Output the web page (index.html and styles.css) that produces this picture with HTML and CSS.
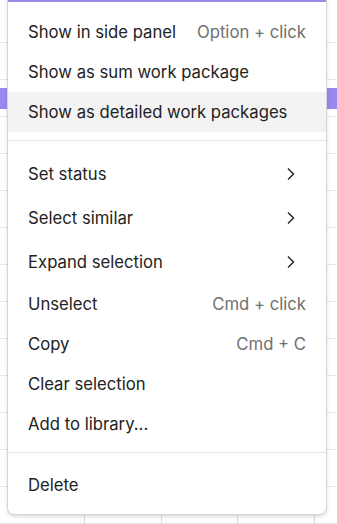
FILE: index.html
```html
<!DOCTYPE html>
<html lang="en">
<head>
    <meta charset="UTF-8">
    <meta name="viewport" content="width=device-width, initial-scale=1.0">
    <title>Context menu</title>
    <link rel="stylesheet" href="styles.css">
</head>
<body>
    <div class="sheet">
        <div class="row short"></div>
        <div class="row"></div>
        <div class="row selected"></div>
        <div class="row"></div>
        <div class="row"></div>
        <div class="row"></div>
        <div class="row"></div>
        <div class="row"></div>
        <div class="row"></div>
        <div class="row"></div>
        <div class="row"></div>
        <div class="row"></div>
        <div class="row"></div>
        <div class="row cols"></div>
    </div>

    <div class="context-menu">
        <div class="menu-group">
            <div class="menu-item"><span>Show in side panel</span><span class="shortcut">Option + click</span></div>
            <div class="menu-item"><span>Show as sum work package</span></div>
            <div class="menu-item active"><span>Show as detailed work packages</span></div>
        </div>
        <div class="menu-group">
            <div class="menu-item submenu"><span>Set status</span>
                <svg class="chevron" width="10" height="14" viewBox="0 0 10 14"><path d="M2 1.5 L7.5 7 L2 12.5" /></svg>
            </div>
            <div class="menu-item submenu"><span>Select similar</span>
                <svg class="chevron" width="10" height="14" viewBox="0 0 10 14"><path d="M2 1.5 L7.5 7 L2 12.5" /></svg>
            </div>
            <div class="menu-item submenu"><span>Expand selection</span>
                <svg class="chevron" width="10" height="14" viewBox="0 0 10 14"><path d="M2 1.5 L7.5 7 L2 12.5" /></svg>
            </div>
            <div class="menu-item"><span>Unselect</span><span class="shortcut">Cmd + click</span></div>
            <div class="menu-item"><span>Copy</span><span class="shortcut">Cmd + C</span></div>
            <div class="menu-item"><span>Clear selection</span></div>
            <div class="menu-item"><span>Add to library...</span></div>
        </div>
        <div class="menu-group">
            <div class="menu-item danger"><span>Delete</span></div>
        </div>
    </div>
</body>
</html>
```

FILE: styles.css
```css
body {
    margin: 0;
    padding: 0;
    font-family: Inter, "Noto Sans", sans-serif;
    background-color: #fff;
    overflow: hidden;
}

/* grid behind the menu */
.sheet {
    display: flex;
    flex-direction: column;
}

.sheet .row {
    height: 36px;
    border-bottom: 1px solid #e6e6e6;
}

.sheet .row.short {
    height: 42px;
}

.sheet .row.selected {
    background: linear-gradient(#fff 0 8px, #9b88ef 8px 29px, #fff 29px);
}

.sheet .row.cols {
    background: linear-gradient(90deg, transparent 84px, #dcdcdc 84px 85px, transparent 85px 161px, #dcdcdc 161px 162px, transparent 162px 237px, #dcdcdc 237px 238px, transparent 238px 314px, #dcdcdc 314px 315px, transparent 315px);
}

.context-menu {
    position: absolute;
    top: 0;
    left: 8px;
    width: 318px;
    box-sizing: border-box;
    background-color: #fff;
    border-top: 2px solid #9b88ef;
    border-radius: 0 0 6px 6px;
    box-shadow: 0 0 0 1px #d4d4d4, 0 2px 4px rgba(0, 0, 0, 0.18);
}

.menu-group {
    padding: 10px 0 8px;
    border-bottom: 1px solid #e4e4e4;
}

.menu-group + .menu-group {
    padding-top: 11px;
}

.menu-group:last-child {
    border-bottom: none;
    padding: 12px 0 9px;
}

.menu-item {
    display: flex;
    align-items: center;
    justify-content: space-between;
    height: 40px;
    padding: 0 20px;
    font-size: 16.7px;
    color: #222;
}

.menu-item.submenu {
    height: 44px;
}

.menu-item.active {
    background-color: #f3f3f3;
}

.shortcut {
    color: #707070;
}

.chevron {
    margin-right: 10px;
}

.chevron path {
    fill: none;
    stroke: #2a2a2a;
    stroke-width: 1.5;
}
```
